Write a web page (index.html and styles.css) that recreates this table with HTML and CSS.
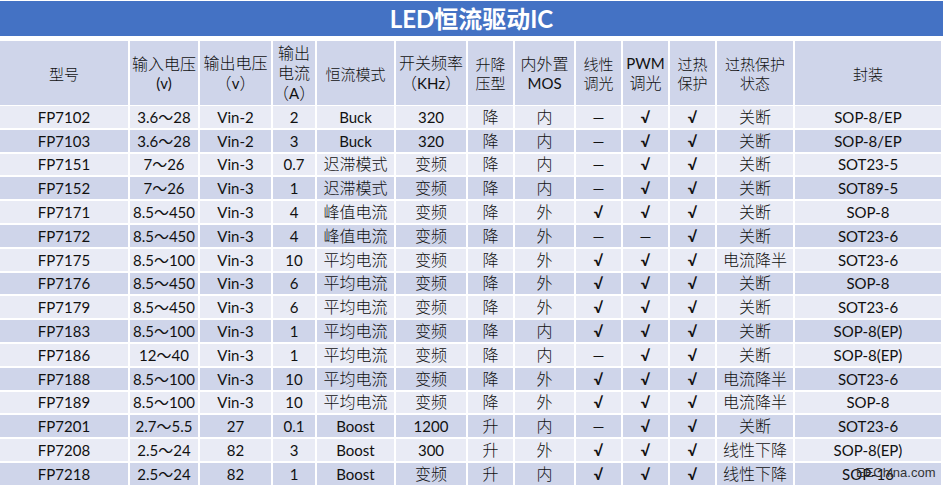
FILE: index.html
```html
<!DOCTYPE html>
<html lang="zh">
<head>
<meta charset="utf-8">
<link rel="stylesheet" href="styles.css">
</head>
<body>
<div class="page">
  <div class="title">LED恒流驱动IC</div>
  <div class="table">
    <div class="row head">
      <div class="zh">型号</div><div><span class="zh">输入电压</span><br>(v)</div><div><span class="zh">输出电压</span><br><span class="zh">（</span>v<span class="zh">）</span></div><div><span class="zh">输出<br>电流<br>（</span>A<span class="zh">）</span></div><div class="zh">恒流模式</div><div><span class="zh">开关频率<br>（</span>KHz<span class="zh">）</span></div><div class="zh">升降<br>压型</div><div><span class="zh">内外置</span><br>MOS</div><div class="zh">线性<br>调光</div><div>PWM<br><span class="zh">调光</span></div><div class="zh">过热<br>保护</div><div class="zh">过热保护<br>状态</div><div class="zh">封装</div>
    </div>
    <div class="row a"><div>FP7102</div><div>3.6～28</div><div>Vin-2</div><div>2</div><div>Buck</div><div>320</div><div class="zh">降</div><div class="zh">内</div><div>—</div><div class="ck">√</div><div class="ck">√</div><div class="zh">关断</div><div>SOP-8/EP</div></div>
    <div class="row b"><div>FP7103</div><div>3.6～28</div><div>Vin-2</div><div>3</div><div>Buck</div><div>320</div><div class="zh">降</div><div class="zh">内</div><div>—</div><div class="ck">√</div><div class="ck">√</div><div class="zh">关断</div><div>SOP-8/EP</div></div>
    <div class="row a"><div>FP7151</div><div>7～26</div><div>Vin-3</div><div>0.7</div><div class="zh">迟滞模式</div><div class="zh">变频</div><div class="zh">降</div><div class="zh">内</div><div>—</div><div class="ck">√</div><div class="ck">√</div><div class="zh">关断</div><div>SOT23-5</div></div>
    <div class="row b"><div>FP7152</div><div>7～26</div><div>Vin-3</div><div>1</div><div class="zh">迟滞模式</div><div class="zh">变频</div><div class="zh">降</div><div class="zh">内</div><div>—</div><div class="ck">√</div><div class="ck">√</div><div class="zh">关断</div><div>SOT89-5</div></div>
    <div class="row a"><div>FP7171</div><div>8.5～450</div><div>Vin-3</div><div>4</div><div class="zh">峰值电流</div><div class="zh">变频</div><div class="zh">降</div><div class="zh">外</div><div class="ck">√</div><div class="ck">√</div><div class="ck">√</div><div class="zh">关断</div><div>SOP-8</div></div>
    <div class="row b"><div>FP7172</div><div>8.5～450</div><div>Vin-3</div><div>4</div><div class="zh">峰值电流</div><div class="zh">变频</div><div class="zh">降</div><div class="zh">外</div><div>—</div><div>—</div><div class="ck">√</div><div class="zh">关断</div><div>SOT23-6</div></div>
    <div class="row a"><div>FP7175</div><div>8.5～100</div><div>Vin-3</div><div>10</div><div class="zh">平均电流</div><div class="zh">变频</div><div class="zh">降</div><div class="zh">外</div><div class="ck">√</div><div class="ck">√</div><div class="ck">√</div><div class="zh">电流降半</div><div>SOT23-6</div></div>
    <div class="row b"><div>FP7176</div><div>8.5～450</div><div>Vin-3</div><div>6</div><div class="zh">平均电流</div><div class="zh">变频</div><div class="zh">降</div><div class="zh">外</div><div class="ck">√</div><div class="ck">√</div><div class="ck">√</div><div class="zh">关断</div><div>SOP-8</div></div>
    <div class="row a"><div>FP7179</div><div>8.5～450</div><div>Vin-3</div><div>6</div><div class="zh">平均电流</div><div class="zh">变频</div><div class="zh">降</div><div class="zh">外</div><div class="ck">√</div><div class="ck">√</div><div class="ck">√</div><div class="zh">关断</div><div>SOT23-6</div></div>
    <div class="row b"><div>FP7183</div><div>8.5～100</div><div>Vin-3</div><div>1</div><div class="zh">平均电流</div><div class="zh">变频</div><div class="zh">降</div><div class="zh">内</div><div class="ck">√</div><div class="ck">√</div><div class="ck">√</div><div class="zh">关断</div><div>SOP-8(EP)</div></div>
    <div class="row a"><div>FP7186</div><div>12～40</div><div>Vin-3</div><div>1</div><div class="zh">平均电流</div><div class="zh">变频</div><div class="zh">降</div><div class="zh">内</div><div>—</div><div class="ck">√</div><div class="ck">√</div><div class="zh">关断</div><div>SOP-8(EP)</div></div>
    <div class="row b"><div>FP7188</div><div>8.5～100</div><div>Vin-3</div><div>10</div><div class="zh">平均电流</div><div class="zh">变频</div><div class="zh">降</div><div class="zh">外</div><div class="ck">√</div><div class="ck">√</div><div class="ck">√</div><div class="zh">电流降半</div><div>SOT23-6</div></div>
    <div class="row a"><div>FP7189</div><div>8.5～100</div><div>Vin-3</div><div>10</div><div class="zh">平均电流</div><div class="zh">变频</div><div class="zh">降</div><div class="zh">外</div><div class="ck">√</div><div class="ck">√</div><div class="ck">√</div><div class="zh">电流降半</div><div>SOP-8</div></div>
    <div class="row b"><div>FP7201</div><div>2.7～5.5</div><div>27</div><div>0.1</div><div>Boost</div><div>1200</div><div class="zh">升</div><div class="zh">内</div><div>—</div><div class="ck">√</div><div class="ck">√</div><div class="zh">关断</div><div>SOT23-6</div></div>
    <div class="row a"><div>FP7208</div><div>2.5～24</div><div>82</div><div>3</div><div>Boost</div><div>300</div><div class="zh">升</div><div class="zh">外</div><div class="ck">√</div><div class="ck">√</div><div class="ck">√</div><div class="zh">线性下降</div><div>SOP-8(EP)</div></div>
    <div class="row b"><div>FP7218</div><div>2.5～24</div><div>82</div><div>1</div><div>Boost</div><div class="zh">变频</div><div class="zh">升</div><div class="zh">内</div><div class="ck">√</div><div class="ck">√</div><div class="ck">√</div><div class="zh">线性下降</div><div>SOP-16</div></div>
  </div>
  <div class="watermark">EEChina.com</div>
</div>
</body>
</html>
```

FILE: styles.css
```css
html, body {
  margin: 0;
  padding: 0;
  background: #ffffff;
}
.page {
  position: relative;
  width: 943px;
  height: 486px;
  overflow: hidden;
  padding-top: 1px;
  box-sizing: border-box;
  font-family: "Lato", "Noto Sans CJK SC", sans-serif;
  color: #111111;
}
.title {
  height: 35px;
  background: #4472C4;
  color: #ffffff;
  font-family: "Lato", "Noto Sans CJK SC", sans-serif;
  font-weight: 700;
  font-size: 24px;
  line-height: 35px;
  text-align: center;
  margin-bottom: 5px;
}
.table {
  display: flex;
  flex-direction: column;
  gap: 2px;
  width: 941px;
}
.row {
  display: grid;
  grid-template-columns: 128px 68px 71px 42px 77px 70px 45px 59px 45px 45px 45px 76px 146px;
  column-gap: 2px;
  height: 21.8px;
}
.row > div {
  display: flex;
  flex-direction: column;
  align-items: center;
  justify-content: center;
  text-align: center;
  font-size: 15px;
  font-weight: 400;
  line-height: 18px;
  white-space: nowrap;
}
.row.head > div {
  display: block;
  align-content: center;
}
.zh,
.row > div.zh {
  font-family: "Noto Sans CJK SC", sans-serif;
  font-weight: 300;
  font-size: 16px;
}
.row:not(.head) > div.zh {
  padding-bottom: 2px;
  box-sizing: border-box;
}
.row > div.ck {
  font-weight: 700;
  font-size: 15px;
}
.row.head {
  height: 64px;
  margin-bottom: -1px;
}
.row.head > div {
  background: #CFD5EA;
  font-size: 15px;
  line-height: 19px;
}
.row.a > div {
  background: #E9EBF5;
}
.row.b > div {
  background: #CFD5EA;
}
.watermark {
  position: absolute;
  left: 856px;
  top: 464px;
  font-family: "Liberation Sans", sans-serif;
  font-size: 13px;
  line-height: 18px;
  color: #333333;
}
```
